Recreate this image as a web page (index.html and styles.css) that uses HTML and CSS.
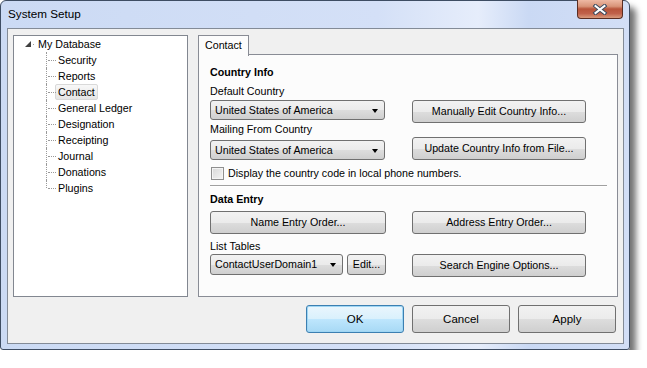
FILE: index.html
```html
<!DOCTYPE html>
<html lang="en">
<head>
    <meta charset="UTF-8">
    <title>System Setup</title>
    <link rel="stylesheet" href="styles.css">
</head>
<body>
    <div class="window">
        <div class="titlebar">
            <span class="title">System Setup</span>
            <div class="close-btn">
                <svg width="16" height="11" viewBox="0 0 16 11">
                    <path d="M3.5 2 L12.5 9 M12.5 2 L3.5 9" stroke="#3b4a5e" stroke-width="4" stroke-linecap="square"/>
                    <path d="M3.5 2 L12.5 9 M12.5 2 L3.5 9" stroke="#ffffff" stroke-width="2" stroke-linecap="square"/>
                </svg>
            </div>
        </div>

        <div class="client">
            <div class="main-row">
                <div class="tree">
                    <div class="tree-root">
                        <svg class="expander" width="6" height="6" viewBox="0 0 6 6">
                            <path d="M6 0 L6 6 L0 6 Z" fill="#404040"/>
                        </svg>
                        <span class="root-dot"></span>
                        <span class="tree-label">My Database</span>
                    </div>
                    <div class="tree-children">
                        <div class="node"><span class="tree-label">Security</span></div>
                        <div class="node"><span class="tree-label">Reports</span></div>
                        <div class="node"><span class="tree-label selected">Contact</span></div>
                        <div class="node"><span class="tree-label">General Ledger</span></div>
                        <div class="node"><span class="tree-label">Designation</span></div>
                        <div class="node"><span class="tree-label">Receipting</span></div>
                        <div class="node"><span class="tree-label">Journal</span></div>
                        <div class="node"><span class="tree-label">Donations</span></div>
                        <div class="node last"><span class="tree-label">Plugins</span></div>
                    </div>
                </div>

                <div class="tabs">
                    <div class="tab-strip">
                        <div class="tab active">Contact</div>
                    </div>
                    <div class="tab-page">
                        <div class="group-title first">Country Info</div>
                        <div class="country-grid">
                            <div class="label">Default Country</div>
                            <div></div>
                            <div class="combo wide">United States of America</div>
                            <div class="btn">Manually Edit Country Info...</div>
                            <div class="label">Mailing From Country</div>
                            <div></div>
                            <div class="combo wide bottom">United States of America</div>
                            <div class="btn">Update Country Info from File...</div>
                        </div>
                        <div class="check-row">
                            <span class="checkbox"></span>
                            <span>Display the country code in local phone numbers.</span>
                        </div>
                        <div class="separator"></div>
                        <div class="group-title">Data Entry</div>
                        <div class="entry-grid">
                            <div class="btn">Name Entry Order...</div>
                            <div class="btn">Address Entry Order...</div>
                            <div class="label bottom">List Tables</div>
                            <div></div>
                            <div class="combo-row">
                                <div class="combo short">ContactUserDomain1</div>
                                <div class="btn edit">Edit...</div>
                            </div>
                            <div class="btn">Search Engine Options...</div>
                        </div>
                    </div>
                </div>
            </div>

            <div class="button-row">
                <div class="dlg-btn default">OK</div>
                <div class="dlg-btn">Cancel</div>
                <div class="dlg-btn">Apply</div>
            </div>
        </div>
    </div>
</body>
</html>
```

FILE: styles.css
```css
body {
    margin: 0;
    background: #ffffff;
    font-family: 'Liberation Sans', Arial, sans-serif;
    font-size: 10.7px;
    color: #000000;
}

.window {
    width: 628px;
    height: 348px;
    border: 1px solid #3e4d63;
    border-radius: 6px 6px 3px 3px;
    background: linear-gradient(to right, #cbdaf4 0%, #d4e0f7 60%, #e6edfb 76%, #cad9f4 84%, #d2def6 100%);
    box-shadow: 6px 7px 6px rgba(0, 0, 0, 0.55);
    position: relative;
    display: flex;
    flex-direction: column;
}

.titlebar {
    height: 27px;
    position: relative;
    display: flex;
    align-items: center;
    padding-left: 7px;
}

.title {
    font-size: 11.7px;
    color: #000000;
    margin-top: -2px;
}

.close-btn {
    position: absolute;
    top: -1px;
    right: 6px;
    width: 44px;
    height: 18px;
    border: 1px solid #5a2d22;
    border-top: none;
    border-radius: 0 0 4px 4px;
    background: linear-gradient(#eeb9a4 0%, #d99479 35%, #b8543a 50%, #c0614a 75%, #d99a7c 100%);
    display: flex;
    align-items: center;
    justify-content: center;
}

.client {
    flex: 1;
    margin: 0 5px 5px 6px;
    border: 1px solid #838b97;
    background: #f0f0f0;
    padding: 6px 5px 0 5px;
    display: flex;
    flex-direction: column;
}

.main-row {
    display: flex;
    gap: 10px;
    height: 262px;
}

/* tree */

.tree {
    width: 173px;
    border: 1px solid #828790;
    background: #ffffff;
}

.tree-root {
    height: 16px;
    display: flex;
    align-items: center;
    padding-left: 11px;
}

.root-dot {
    width: 1px;
    height: 1px;
    background: #a0a0a0;
    margin: 0 1px 0 2px;
}

.tree-label {
    padding: 0 2px;
    line-height: 14px;
    border: 1px solid transparent;
    border-radius: 2px;
}

.tree-label.selected {
    background: linear-gradient(#f8f8f8, #e5e5e5);
    border-color: #d9d9d9;
}

.tree-children {
    margin-left: 32px;
}

.node {
    position: relative;
    height: 16px;
    display: flex;
    align-items: center;
    padding-left: 9px;
}

.node::before {
    content: "";
    position: absolute;
    left: 0;
    top: 0;
    height: 100%;
    border-left: 1px dotted #9a9a9a;
}

.node.last::before {
    height: 8px;
}

.node::after {
    content: "";
    position: absolute;
    left: 2px;
    top: 8px;
    width: 8px;
    border-top: 1px dotted #9a9a9a;
}

/* tabs */

.tabs {
    width: 420px;
    display: flex;
    flex-direction: column;
}

.tab-strip {
    display: flex;
    height: 19px;
}

.tab {
    padding: 0 6px;
    border: 1px solid #898c95;
    border-bottom: none;
    background: #fcfcfc;
    line-height: 19px;
    height: 20px;
    position: relative;
    z-index: 1;
}

.tab-page {
    flex: 1;
    border: 1px solid #898c95;
    background: #fcfcfc;
    padding: 0 10px 0 11px;
}

.group-title {
    font-weight: bold;
    line-height: 16px;
    margin-top: 4px;
}

.group-title.first {
    margin-top: 9px;
}

.label {
    line-height: 15px;
}

.label.bottom {
    align-self: end;
}

.country-grid {
    margin-top: 3px;
    display: grid;
    grid-template-columns: 176px 174px;
    grid-template-rows: 17px 22px 15px 23px;
    column-gap: 26px;
    align-items: start;
}

.country-grid .label {
    align-self: center;
}

.combo {
    height: 18px;
    border: 1px solid #707070;
    border-radius: 3px;
    background: linear-gradient(#f2f2f2 0%, #ebebeb 50%, #dddddd 51%, #cfcfcf 100%);
    line-height: 18px;
    padding-left: 4px;
    position: relative;
}

.combo::after {
    content: "";
    position: absolute;
    right: 6px;
    top: 8px;
    border-left: 3.5px solid transparent;
    border-right: 3.5px solid transparent;
    border-top: 4px solid #000000;
}

.combo.wide {
    width: 169px;
}

.combo.bottom {
    align-self: end;
}

.combo.short {
    width: 127px;
    height: 19px;
    line-height: 19px;
}

.btn {
    height: 21px;
    border: 1px solid #707070;
    border-radius: 3px;
    background: linear-gradient(#f2f2f2 0%, #ebebeb 50%, #dddddd 51%, #cfcfcf 100%);
    text-align: center;
    line-height: 21px;
}

.check-row {
    margin-top: 5px;
    height: 16px;
    display: flex;
    align-items: center;
    gap: 4px;
}

.checkbox {
    width: 11px;
    height: 11px;
    margin-left: 1px;
    border: 1px solid #8f8f8f;
    background: linear-gradient(135deg, #d8d8d8, #f4f4f4);
    box-shadow: inset 0 0 0 1px #f4f4f4;
}

.separator {
    margin-top: 4px;
    height: 0;
    border-top: 1px solid #a0a0a0;
    border-bottom: 1px solid #ffffff;
}

.entry-grid {
    margin-top: 4px;
    display: grid;
    grid-template-columns: 176px 174px;
    grid-template-rows: 23px 20px 22px;
    column-gap: 26px;
    align-items: start;
}

.combo-row {
    display: flex;
    gap: 4px;
}

.btn.edit {
    width: 37px;
    height: 19px;
    line-height: 19px;
}

/* dialog buttons */

.button-row {
    margin-top: 8px;
    margin-right: 2px;
    display: flex;
    justify-content: flex-end;
    gap: 8px;
}

.dlg-btn {
    width: 96px;
    height: 26px;
    border: 1px solid #707070;
    border-radius: 3px;
    background: linear-gradient(#f2f2f2 0%, #ebebeb 50%, #dddddd 51%, #cfcfcf 100%);
    text-align: center;
    line-height: 26px;
    font-size: 11.5px;
}

.dlg-btn.default {
    border-color: #3c7fb1;
    background: linear-gradient(#eaf6fd 0%, #d9f0fc 50%, #bee6fd 51%, #a7d9f5 100%);
    box-shadow: inset 0 0 0 1px #9fd6f4;
}
```
